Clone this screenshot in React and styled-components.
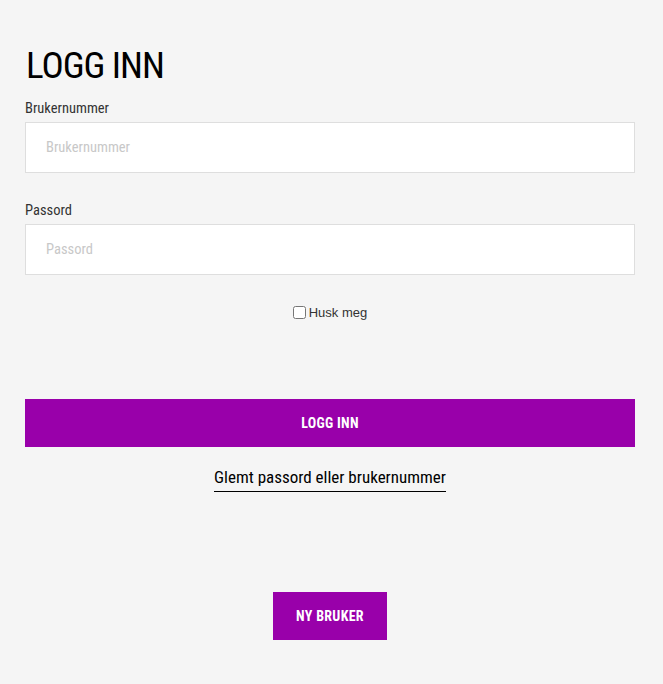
import React, { useState } from 'react';
import styled, { createGlobalStyle } from 'styled-components';

const GlobalStyle = createGlobalStyle`
  html, body {
    margin: 0;
    padding: 0;
    background: #f5f5f5;
  }
  body {
    font-family: Roboto, "Open Sans", sans-serif;
    font-stretch: 75%;
  }
`;

const Page = styled.div`
  padding: 44px 28px 44px 25px;
  display: flex;
  flex-direction: column;
`;

const Title = styled.h1`
  margin: 0 0 12px 1px;
  font-size: 37px;
  line-height: 44px;
  font-weight: 400;
  color: #000;
  letter-spacing: -1px;
`;

const Field = styled.div`
  display: flex;
  flex-direction: column;
  margin-bottom: ${(p) => p.$gap || '29px'};
`;

const Label = styled.label`
  font-size: 14.5px;
  line-height: 18px;
  color: #333;
  margin-bottom: 4px;
`;

const Input = styled.input`
  box-sizing: border-box;
  height: 51px;
  width: 100%;
  border: 1px solid #dedede;
  background: #fff;
  padding: 0 20px;
  font-family: inherit;
  font-stretch: 75%;
  font-size: 14.5px;
  color: #333;
  outline: none;

  &::placeholder {
    color: #c8c8c8;
  }
`;

const CheckRow = styled.label`
  display: flex;
  align-items: center;
  justify-content: center;
  gap: 3px;
  font-family: "Liberation Sans", Arial, sans-serif;
  font-stretch: normal;
  font-size: 13px;
  line-height: 15px;
  color: #333;
  margin-top: 30px;
  margin-bottom: 79px;

  input {
    margin: 0;
    width: 13px;
    height: 13px;
  }
`;

const PrimaryButton = styled.button`
  box-sizing: border-box;
  height: 48px;
  width: ${(p) => (p.$wide ? '100%' : 'auto')};
  padding: 0 23px;
  align-self: center;
  border: none;
  background: #9900aa;
  color: #fff;
  font-family: inherit;
  font-stretch: 75%;
  font-weight: 700;
  font-size: 14px;
  letter-spacing: 0.3px;
  cursor: pointer;
`;

const LinkRow = styled.div`
  display: flex;
  justify-content: center;
  margin-top: 20px;
  margin-bottom: 100px;
`;

const TextLink = styled.a`
  font-size: 17px;
  line-height: 20px;
  color: #000;
  text-decoration: none;
  border-bottom: 1px solid #000;
  padding-bottom: 4px;
  cursor: pointer;
`;

export default function App() {
  const [remember, setRemember] = useState(false);

  return (
    <>
      <GlobalStyle />
      <Page>
        <Title>LOGG INN</Title>

        <Field>
          <Label htmlFor="user">Brukernummer</Label>
          <Input id="user" placeholder="Brukernummer" />
        </Field>

        <Field $gap="0">
          <Label htmlFor="pass">Passord</Label>
          <Input id="pass" type="password" placeholder="Passord" />
        </Field>

        <CheckRow>
          <input
            type="checkbox"
            checked={remember}
            onChange={(e) => setRemember(e.target.checked)}
          />
          Husk meg
        </CheckRow>

        <PrimaryButton $wide>LOGG INN</PrimaryButton>

        <LinkRow>
          <TextLink>Glemt passord eller brukernummer</TextLink>
        </LinkRow>

        <PrimaryButton>NY BRUKER</PrimaryButton>
      </Page>
    </>
  );
}
